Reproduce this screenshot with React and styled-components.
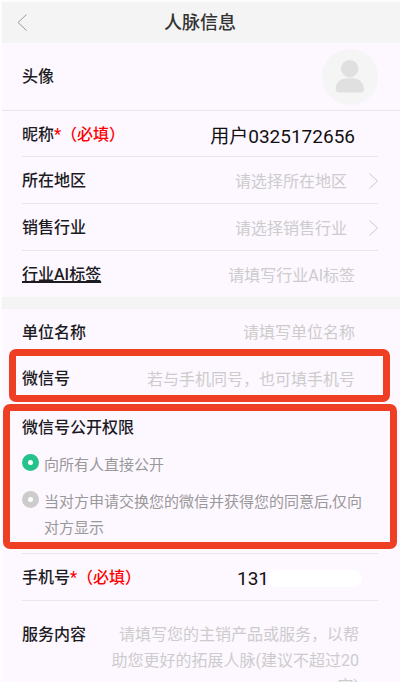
import { useState } from 'react';
import styled, { createGlobalStyle } from 'styled-components';

const GlobalStyle = createGlobalStyle`
  * {
    box-sizing: border-box;
  }

  body {
    margin: 0;
    background: #ffffff;
    font-family: Roboto, 'Noto Sans CJK SC', sans-serif;
    font-size: 16px;
    color: #1c1b1f;
  }

  input,
  select,
  textarea,
  button {
    margin: 0;
    padding: 0;
    border: 0;
    outline: 0;
    background: none;
    font: inherit;
    color: inherit;
  }
`;

const Page = styled.main`
  height: 100vh;
  overflow-y: auto;
  scrollbar-width: none;
  border: solid #fdfdfd;
  border-width: 2px 0 0 2px;
  background: #fdf7ff;
`;

const Header = styled.header`
  display: grid;
  grid-template-columns: 40px 1fr 42px;
  align-items: center;
  height: 41px;
  background: #f4f4f4;
`;

const BackButton = styled.button`
  display: flex;
  padding-left: 15px;
`;

const Title = styled.h1`
  margin: 0;
  text-align: center;
  font-size: 18px;
  line-height: 26px;
  font-weight: 500;
  color: #333333;
`;

const AvatarRow = styled.div`
  display: flex;
  align-items: center;
  justify-content: space-between;
  height: 68px;
  padding: 0 22px 0 20px;
  border-bottom: 1px solid #e8e6ea;
`;

const AvatarButton = styled.button`
  display: flex;
  border-radius: 50%;
`;

const Section = styled.section`
  padding: 0 22px 0 20px;
`;

const Row = styled.div`
  position: relative;
  display: flex;
  align-items: center;
  gap: 12px;
  height: ${({ $tall }) => ($tall ? '47px' : '46px')};
  padding-top: 2px;
  border-bottom: ${({ $last }) => ($last ? '0' : '1px solid #e8e6ea')};
`;

const Label = styled.label`
  flex: none;
  line-height: 26px;
  font-weight: 500;
  text-decoration: ${({ $underline }) => ($underline ? 'underline' : 'none')};
  text-decoration-thickness: 2px;
`;

const Required = styled.span`
  color: #ff0000;
`;

const TextInput = styled.input`
  flex: 1;
  min-width: 0;
  padding-right: 23px;
  text-align: right;
  font-size: ${({ $large }) => ($large ? '19px' : '16px')};
  color: #111111;

  &::placeholder {
    color: #cccccc;
    opacity: 1;
  }
`;

const Select = styled.select`
  flex: 1;
  min-width: 0;
  appearance: none;
  text-align: right;
  text-align-last: right;
  color: #cccccc;
`;

const Chevron = styled.svg`
  flex: none;
  margin-left: 10px;
`;

const Band = styled.div`
  height: 12px;
  background: #f4f4f4;
`;

const Highlight = styled.div`
  position: absolute;
  inset: ${({ $inset }) => $inset};
  border: 7px solid #ee3e24;
  border-radius: 7px;
  pointer-events: none;
`;

const Permission = styled.fieldset`
  position: relative;
  display: flex;
  flex-direction: column;
  gap: 11px;
  min-width: 0;
  margin: 0;
  padding: 13px 0 12px;
  border: 0;
  border-bottom: 1px solid #e8e6ea;
`;

const PermissionTitle = styled.div`
  line-height: 26px;
  font-weight: 500;
`;

const Option = styled.label`
  display: flex;
  align-items: flex-start;
  gap: 5px;
  padding-right: 8px;
  font-size: 15px;
  line-height: 26px;
  color: #999999;
`;

const Radio = styled.input`
  flex: none;
  appearance: none;
  width: 17px;
  height: 17px;
  margin-top: 2px;
  border: 6px solid #cccccc;
  border-radius: 50%;
  background: #ffffff;

  &:checked {
    border-color: #26c28b;
  }
`;

const PhoneField = styled.div`
  display: flex;
  flex: 1;
  align-items: center;
  justify-content: flex-end;
  padding-right: 16px;
`;

const PhoneInput = styled.input`
  width: 32px;
  font-size: 19px;
  color: #111111;
`;

const Mask = styled.span`
  width: 93px;
  height: 17px;
  border-radius: 8px;
  background: #ffffff;
`;

const ServiceRow = styled.div`
  display: flex;
  align-items: flex-start;
  justify-content: space-between;
  padding-top: 21px;
`;

const TextArea = styled.textarea`
  width: 254px;
  margin-right: 19px;
  resize: none;
  overflow: hidden;
  text-align: right;
  line-height: 26px;

  &::placeholder {
    color: #cccccc;
    opacity: 1;
  }
`;

const permissions = [
  { value: 'public', text: '向所有人直接公开' },
  { value: 'approved', text: '当对方申请交换您的微信并获得您的同意后,仅向对方显示' },
];

const TextRow = ({ id, label, required, underline, last, large, tall, children, ...input }) => (
  <Row $last={last} $tall={tall}>
    <Label htmlFor={id} $underline={underline}>
      {label}
      {required && <Required>*（必填）</Required>}
    </Label>
    <TextInput id={id} $large={large} {...input} />
    {children}
  </Row>
);

const SelectRow = ({ id, label, placeholder, tall }) => (
  <Row $tall={tall}>
    <Label htmlFor={id}>{label}</Label>
    <Select id={id} defaultValue="">
      <option value="">{placeholder}</option>
    </Select>
    <Chevron width="9" height="16" viewBox="0 0 9 16" fill="none" stroke="#c8c8c8">
      <path d="M0.5 0.5 8.5 8 0.5 15.5" />
    </Chevron>
  </Row>
);

const App = () => {
  const [permission, setPermission] = useState('public');

  return (
    <>
      <GlobalStyle />
      <Page>
        <Header>
          <BackButton type="button" aria-label="返回">
            <svg width="10" height="17" viewBox="0 0 10 17" fill="none" stroke="#999999">
              <path d="M9.5 0.5 1 8.5 9.5 16.5" />
            </svg>
          </BackButton>
          <Title>人脉信息</Title>
        </Header>

        <AvatarRow>
          <Label as="span">头像</Label>
          <AvatarButton type="button" aria-label="头像">
            <svg width="56" height="56" viewBox="0 0 56 56">
              <circle cx="28" cy="28" r="28" fill="#f5f5f5" />
              <g fill="#e0e0e0">
                <circle cx="27.7" cy="19.7" r="8.7" />
                <path d="M13.7 40.5C13.7 33 19 29.2 25 29.2h5.5C36.5 29.2 41.9 33 41.9 40.5a3 3 0 0 1-3 3H16.7a3 3 0 0 1-3-3Z" />
              </g>
            </svg>
          </AvatarButton>
        </AvatarRow>

        <Section>
          <TextRow id="nickname" label="昵称" required large defaultValue="用户0325172656" />
          <SelectRow id="region" label="所在地区" placeholder="请选择所在地区" tall />
          <SelectRow id="industry" label="销售行业" placeholder="请选择销售行业" tall />
          <TextRow
            id="tags"
            label="行业AI标签"
            placeholder="请填写行业AI标签"
            underline
            last
          />
        </Section>

        <Band />

        <Section>
          <TextRow id="company" label="单位名称" placeholder="请填写单位名称" />
          <TextRow id="wechat" label="微信号" placeholder="若与手机同号，也可填手机号" tall>
            <Highlight $inset="-6px -12px -1px -13px" />
          </TextRow>

          <Permission aria-labelledby="permission-title">
            <PermissionTitle id="permission-title">微信号公开权限</PermissionTitle>
            {permissions.map(({ value, text }) => (
              <Option key={value}>
                <Radio
                  type="radio"
                  name="permission"
                  value={value}
                  checked={permission === value}
                  onChange={() => setPermission(value)}
                />
                <span>{text}</span>
              </Option>
            ))}
            <Highlight $inset="2px -19px 4px -19px" />
          </Permission>

          <Row $tall>
            <Label htmlFor="phone">
              手机号<Required>*（必填）</Required>
            </Label>
            <PhoneField>
              <PhoneInput id="phone" type="tel" defaultValue="131" />
              <Mask />
            </PhoneField>
          </Row>

          <ServiceRow>
            <Label htmlFor="service">服务内容</Label>
            <TextArea
              id="service"
              rows={3}
              placeholder="请填写您的主销产品或服务，以帮助您更好的拓展人脉(建议不超过20字)"
            />
          </ServiceRow>
        </Section>
      </Page>
    </>
  );
};

export default App;
